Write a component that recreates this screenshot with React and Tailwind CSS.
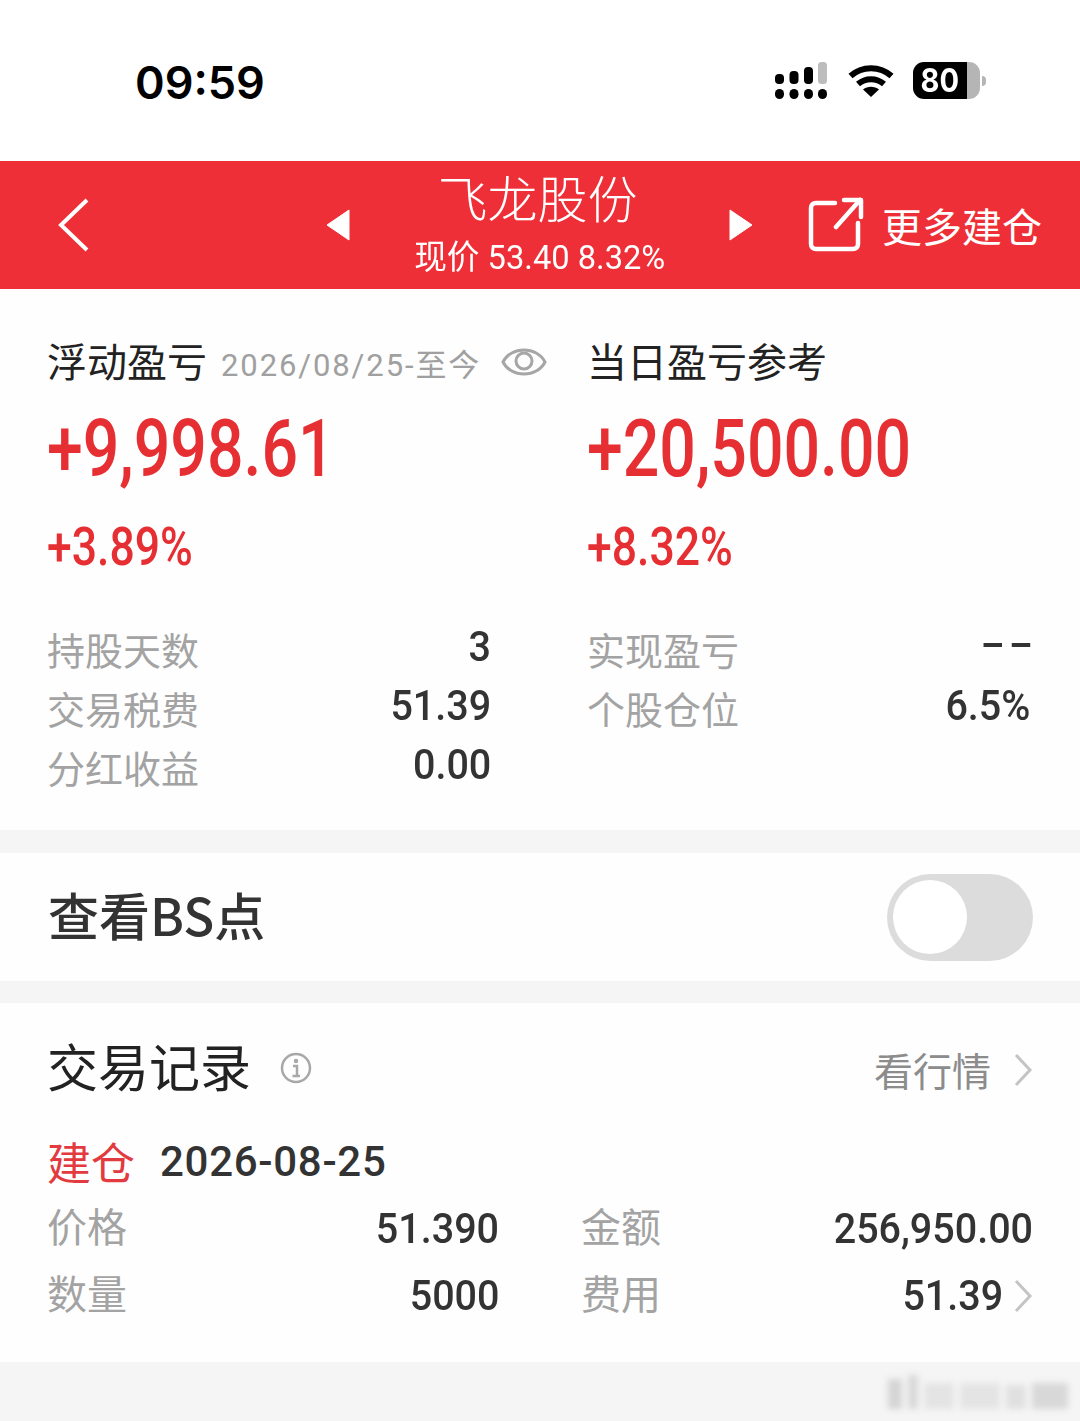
import React from 'react';

const CJK = "font-['Noto_Sans_CJK_SC',sans-serif]";
const NUM = "font-['Roboto','Noto_Sans_CJK_SC',sans-serif]";

const SignalIcon = () => (
    <svg width="54" height="38" viewBox="0 0 54 38">
        <rect x="0" y="12" width="9" height="10" rx="4" fill="#000" />
        <rect x="14.5" y="9" width="9" height="13" rx="4" fill="#000" />
        <rect x="29" y="5" width="9" height="17" rx="4" fill="#000" />
        <rect x="43" y="0" width="9" height="22" rx="3.5" fill="#bdbdbd" />
        <rect x="0" y="27" width="9" height="10" rx="4.5" fill="#000" />
        <rect x="14.5" y="27" width="9" height="10" rx="4.5" fill="#000" />
        <rect x="29" y="27" width="9" height="10" rx="4.5" fill="#000" />
        <rect x="43" y="27" width="9" height="10" rx="4.5" fill="#000" />
    </svg>
);

const WifiIcon = () => (
    <svg width="46" height="34" viewBox="0 0 46 34" fill="none" stroke="#000" strokeWidth="6">
        <path d="M2.5 12C14 1.5 32 1.5 43.500 12" />
        <path d="M10 20C17.500 13.500 28.500 13.500 36 20" />
        <path d="M23 33L15 25.500C19.500 21.800 26.500 21.800 31 25.500Z" fill="#000" stroke="none" />
    </svg>
);

const BatteryIcon = () => (
    <div className="flex items-center">
        <div className="flex items-center justify-center w-[54px] h-[37px] bg-black rounded-l-[11px]">
            <span className="text-white text-[33px] font-bold font-['Inter',sans-serif] leading-none inline-block scale-x-[0.88]">80</span>
        </div>
        <div className="w-[13px] h-[37px] bg-[#b5b5b5] rounded-r-[11px]"></div>
        <div className="w-[4px] h-[10px] ml-[2px] rounded-r-full bg-[#b5b5b5]"></div>
    </div>
);

const Triangle = ({ flip }) => (
    <svg width="26" height="32" viewBox="0 0 26 32">
        <path d={flip ? 'M2 1L24 16L2 31Z' : 'M24 1L2 16L24 31Z'} fill="#fff" stroke="#fff" strokeLinejoin="round" />
    </svg>
);

const ShareIcon = () => (
    <svg width="56" height="56" viewBox="0 0 56 56" fill="none" stroke="#fff" strokeWidth="4.500" strokeLinecap="round" strokeLinejoin="round">
        <path d="M27 6H8C5 6 3 8 3 11V47C3 50 5 52 8 52H45C48 52 50 50 50 47V26" />
        <path d="M28 30L52 3" />
        <path d="M36 3H53V20" />
    </svg>
);

const Chevron = ({ color = '#c4c4c4' }) => (
    <svg width="20" height="34" viewBox="0 0 20 34" fill="none" stroke={color} strokeWidth="3">
        <path d="M3 2L17 17L3 32" />
    </svg>
);

const EyeIcon = () => (
    <svg width="46" height="34" viewBox="0 0 46 34" fill="none" stroke="#a6a6a6" strokeWidth="3">
        <path d="M2 17C10 1 36 1 44 17C36 33 10 33 2 17Z" />
        <circle cx="23" cy="16" r="8" />
    </svg>
);

const InfoIcon = () => (
    <svg width="32" height="32" viewBox="0 0 32 32" fill="none" stroke="#a8a8a8" strokeWidth="2.500">
        <circle cx="16" cy="16" r="14" />
        <path d="M13 14H17V24M12.500 24H20" />
        <circle cx="16" cy="9" r="1" fill="#a8a8a8" />
    </svg>
);

const Stat = ({ label, value }) => (
    <div className="flex items-center justify-between h-[59px]">
        <span className={`${CJK} text-[38px] text-[#a3a3a3]`}>{label}</span>
        {value === '--' ? (
            <span className={`${NUM} text-[42px] font-medium text-[#333] inline-block scale-x-[1.7] origin-right tracking-[2.3px] -mr-[7px] -mt-[10px]`}>{value}</span>
        ) : (
            <span className={`${NUM} text-[42px] font-medium text-[#333] inline-block scale-x-[0.94] origin-right -mt-[5px]`}>{value}</span>
        )}
    </div>
);

const TradeCell = ({ label, value, chevron }) => (
    <div className="flex items-center justify-between h-[57px]">
        <span className={`${CJK} text-[40px] leading-[48px] text-[#a3a3a3] mb-[3px]`}>{label}</span>
        <div className="flex items-center mt-[5px]">
            <span className={`${NUM} text-[42px] leading-[48px] font-medium text-[#333] inline-block scale-x-[0.94] origin-right`}>{value}</span>
            {chevron && <div className="ml-[10px]"><Chevron /></div>}
        </div>
    </div>
);

const App = () => {
    return (
        <div className="w-[1080px] h-[1421px] bg-[#f5f5f5] overflow-hidden flex flex-col">
            {/* status bar */}
            <div className="h-[161px] bg-white flex items-center justify-between pl-[135px] pr-[94px]">
                <span className="font-['Inter',sans-serif] font-semibold text-[45px] text-black mt-[4px]">09:59</span>
                <div className="flex items-center gap-[19px]">
                    <SignalIcon />
                    <WifiIcon />
                    <BatteryIcon />
                </div>
            </div>

            {/* red header */}
            <div className="h-[128px] bg-[#ee2f37] flex items-center pl-[58px] text-white">
                <svg width="32" height="54" viewBox="0 0 32 54" fill="none" stroke="#fff" strokeWidth="4">
                    <path d="M29 2L3 27L29 52" />
                </svg>
                <div className="ml-[235px]"><Triangle /></div>
                <div className="w-[377px] flex flex-col items-center pb-[6px]">
                    <span className={`${CJK} font-light text-[50px] leading-[58px] mr-[4px]`}>飞龙股份</span>
                    <span className={`${NUM} text-[34px] leading-[40px] mt-[12px] whitespace-pre inline-block scale-x-[0.96]`}>现价 53.40 8.32%</span>
                </div>
                <Triangle flip />
                <div className="ml-[54px]"><ShareIcon /></div>
                <span className={`${CJK} text-[40px] ml-[18px] whitespace-nowrap`}>更多建仓</span>
            </div>

            {/* pnl card */}
            <div className="h-[541px] bg-[#fefefe] mb-[23px] pl-[47px] pt-[45px] grid grid-cols-[444px_443px] gap-x-[96px] content-start">
                <div>
                    <div className="flex items-center h-[52px] whitespace-nowrap">
                        <span className={`${CJK} text-[40px] text-[#222]`}>浮动盈亏</span>
                        <span className={`${NUM} text-[31px] text-[#a0a0a0] ml-[14px] tracking-[1.9px] mt-[13px]`}>2026/08/25-至今</span>
                        <div className="ml-[20px] mt-[4px]"><EyeIcon /></div>
                    </div>
                    <div className={`${NUM} text-[79px] font-medium text-[#e62f33] leading-[86px] mt-[20px] origin-left scale-x-[0.815] whitespace-nowrap`}>+9,998.61</div>
                    <div className={`${NUM} text-[53px] font-medium text-[#e62f33] leading-[60px] mt-[25px] origin-left scale-x-[0.84]`}>+3.89%</div>
                    <div className="mt-[42px]">
                        <Stat label="持股天数" value="3" />
                        <Stat label="交易税费" value="51.39" />
                        <Stat label="分红收益" value="0.00" />
                    </div>
                </div>
                <div>
                    <div className={`${CJK} text-[40px] text-[#222] h-[52px] flex items-center`}>当日盈亏参考</div>
                    <div className={`${NUM} text-[79px] font-medium text-[#e62f33] leading-[86px] mt-[20px] origin-left scale-x-[0.815] whitespace-nowrap`}>+20,500.00</div>
                    <div className={`${NUM} text-[53px] font-medium text-[#e62f33] leading-[60px] mt-[25px] origin-left scale-x-[0.84]`}>+8.32%</div>
                    <div className="mt-[42px]">
                        <Stat label="实现盈亏" value="--" />
                        <Stat label="个股仓位" value="6.5%" />
                    </div>
                </div>
            </div>

            {/* BS toggle */}
            <div className="h-[128px] bg-[#fefefe] mb-[22px] flex items-center justify-between pl-[48px] pr-[47px]">
                <span className={`${CJK} text-[51px] font-medium text-[#333] -mt-[5px]`}>查看BS点</span>
                <div className="w-[146px] h-[87px] rounded-full bg-[#dcdcdc] flex items-center pl-[6px]">
                    <div className="w-[74px] h-[74px] rounded-full bg-white"></div>
                </div>
            </div>

            {/* trade records */}
            <div className="h-[359px] bg-[#fefefe] pl-[47px] pr-[47px] pt-[30px]">
                <div className="flex items-center justify-between h-[64px]">
                    <div className="flex items-center">
                        <span className={`${CJK} text-[51px] text-[#222]`}>交易记录</span>
                        <div className="ml-[29px] mt-[5px]"><InfoIcon /></div>
                    </div>
                    <div className="flex items-center mt-[9px]">
                        <span className={`${CJK} text-[39px] text-[#8c8c8c]`}>看行情</span>
                        <div className="ml-[22px]"><Chevron /></div>
                    </div>
                </div>
                <div className="flex items-center mt-[34px] h-[60px]">
                    <span className={`${CJK} text-[44px] text-[#e23a3f]`}>建仓</span>
                    <span className={`${NUM} text-[42px] font-medium text-[#333] ml-[25px] tracking-[0.7px]`}>2026-08-25</span>
                </div>
                <div className="grid grid-cols-[452px_452px] gap-x-[82px] gap-y-[10px] mt-[7px]">
                    <TradeCell label="价格" value="51.390" />
                    <TradeCell label="金额" value="256,950.00" />
                    <TradeCell label="数量" value="5000" />
                    <TradeCell label="费用" value="51.39" chevron />
                </div>
            </div>

            {/* blurred watermark */}
            <div className="flex-1 flex items-center justify-end pr-[12px]">
                <div className="flex items-end gap-[6px] h-[34px] blur-[3px]">
                    <div className="w-[14px] h-[30px] bg-[#d4d4d4]"></div>
                    <div className="w-[10px] h-[34px] bg-[#d8d8d8]"></div>
                    <div className="w-[30px] h-[26px] bg-[#e4e4e4]"></div>
                    <div className="w-[40px] h-[26px] bg-[#e4e4e4]"></div>
                    <div className="w-[20px] h-[24px] bg-[#e0e0e0]"></div>
                    <div className="w-[36px] h-[26px] bg-[#d8d8d8]"></div>
                </div>
            </div>
        </div>
    );
};

export default App;
